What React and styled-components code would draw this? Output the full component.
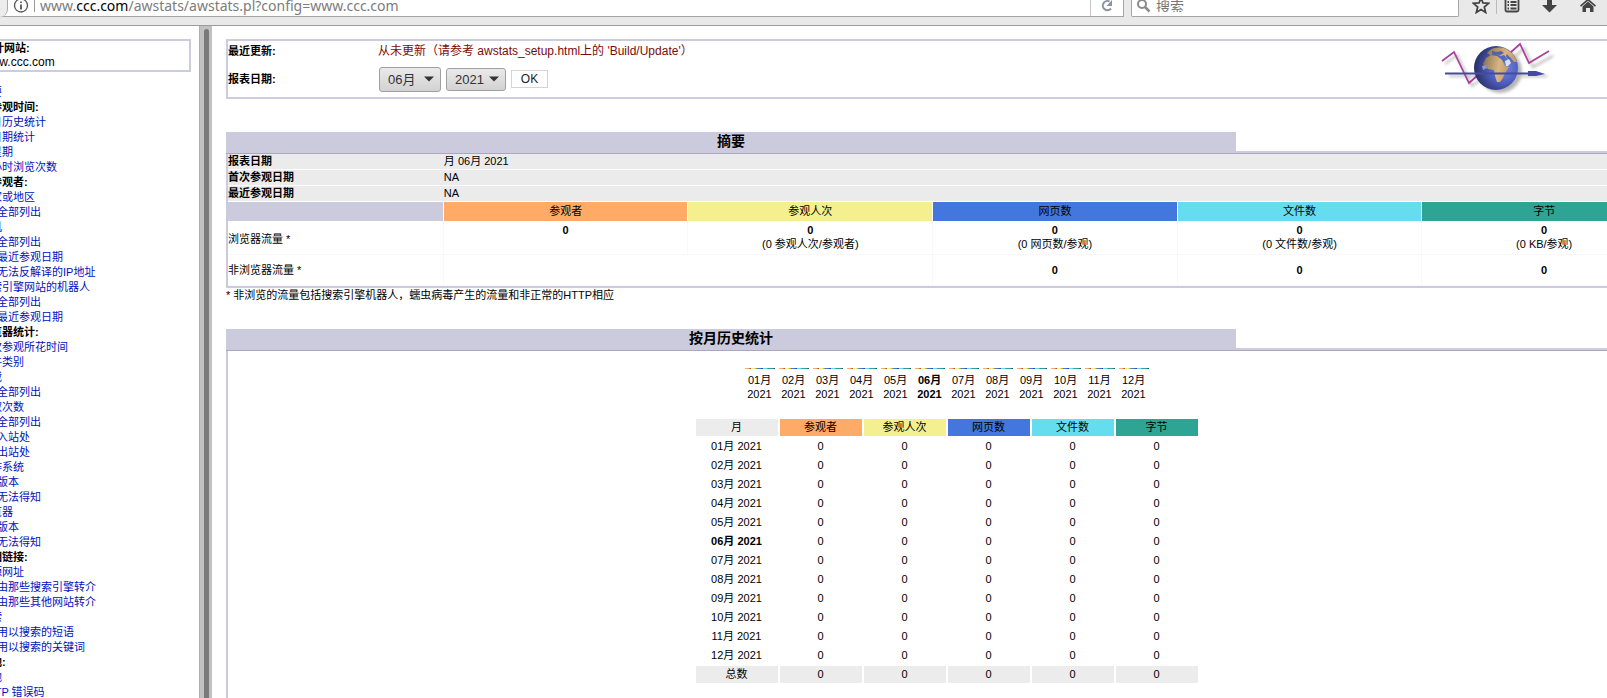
import styled, { createGlobalStyle, css } from 'styled-components';

const GlobalStyle = createGlobalStyle`
* {
	box-sizing: border-box;
}
html, body, #root {
	height: 100%;
}
body {
	margin: 0;
	overflow: hidden;
	background: #fff;
	color: #000;
	font: 11px/15px "Liberation Sans", "Noto Sans CJK SC", sans-serif;
}
a {
	color: #0011bb;
	text-decoration: none;
}
`;

const Page = styled.div`
display: flex;
flex-direction: column;
height: 100vh;
`;

/* browser bar */
const Toolbar = styled.header`
display: flex;
align-items: flex-start;
flex: none;
height: 26px;
background: #e9e9e9;
border-bottom: 1px solid #999b9f;
overflow: hidden;
`;

const Field = styled.div`
display: flex;
align-items: flex-start;
height: 17px;
background: #fff;
border: 1px solid #a5a5a5;
border-top: none;
`;

const UrlField = styled(Field)`
flex: 1;
border-left: none;
`;

const SearchField = styled(Field)`
width: 328px;
margin-left: 7px;
padding-left: 5px;
gap: 5px;
border-radius: 0 0 2px 2px;
`;

const BackEdge = styled.div`
flex: none;
width: 8px;
height: 17px;
background: #ececec;
border-right: 1px solid #aaa;
border-radius: 0 0 12px 0;
`;

const Url = styled.div`
flex: 1;
height: 12px;
padding-left: 5px;
border-left: 1px solid #999;
color: #7c7c7c;
font: 14px/11px "Noto Sans", sans-serif;
b {
	font-weight: 400;
	color: #000;
}
`;

const Reload = styled.button`
display: flex;
justify-content: center;
width: 33px;
height: 16px;
padding: 0;
background: none;
border: none;
border-left: 1px solid #c4c4c4;
`;

const SearchInput = styled.input`
flex: 1;
min-width: 0;
height: 12px;
padding: 0;
border: none;
outline: none;
background: none;
color: #777;
font: 14px/12px "Noto Sans CJK SC", sans-serif;
&::placeholder {
	color: #777;
	opacity: 1;
}
`;

const Tools = styled.div`
display: flex;
align-items: flex-start;
margin-left: 13px;
padding-right: 9px;
`;

const Tool = styled.button`
display: flex;
width: ${p => p.$w || 18}px;
height: 14px;
margin-left: ${p => p.$gap || 0}px;
padding: 0;
border: none;
background: none;
`;

const Divider = styled.i`
width: 1px;
height: 14px;
margin-left: 6px;
background: #bbb;
`;

const Frames = styled.div`
display: flex;
flex: 1;
min-height: 0;
`;

/* left frame, scrolled sideways so the line starts are cut */
const Sidebar = styled.nav`
flex: none;
width: 199px;
padding: 13px 8px 0 0;
overflow: hidden;
`;

const SiteBox = styled.div`
margin-left: -24px;
padding: 0 0 0 4px;
border: 2px solid #ccccdd;
font-size: 12px;
line-height: 15px;
b {
	display: block;
	font-size: 11px;
	line-height: 14px;
}
`;

const Menu = styled.ul`
margin: 13px 0 0 -20px;
padding: 0;
list-style: none;
`;

const MenuItem = styled.li`
height: 15px;
padding-left: ${p => (p.$sub ? 17 : 0)}px;
font-weight: ${p => (p.$head ? 700 : 400)};
white-space: nowrap;
`;

const Scrollbar = styled.div`
flex: none;
width: 13px;
padding: 3px 3px 0 4px;
background: #c1c1c1;
border-left: 1px solid #b0b0b0;
`;

const Thumb = styled.div`
height: 100%;
border-radius: 3px 3px 0 0;
background: #777a79;
`;

/* right frame, wider than the window */
const Main = styled.main`
flex: 1;
min-width: 0;
padding: 13px 0 0 14px;
overflow: hidden;
`;

const Wide = styled.div`
margin-right: -62px;
`;

const FilterBox = styled.form`
display: flex;
justify-content: space-between;
height: 60px;
border: 2px solid #ccccdd;
`;

const FilterGrid = styled.div`
display: grid;
grid-template-columns: 150px auto;
grid-template-rows: 20px 36px;
align-items: center;
font-weight: 700;
`;

const Updated = styled.span`
font-size: 12px;
font-weight: 400;
color: #7d0a0a;
`;

const Controls = styled.div`
display: flex;
align-items: center;
gap: 5px;
padding-left: 1px;
`;

const SelectWrap = styled.label`
display: grid;
align-items: center;
color: #333;
select {
	grid-area: 1 / 1;
	appearance: none;
	width: ${p => p.$w}px;
	height: ${p => p.$h}px;
	padding: 0 0 0 8px;
	border: 1px solid #a0a0a0;
	border-radius: 3px;
	background: linear-gradient(#eaeaea, #d2d2d2);
	color: #333;
	font: 13px "Liberation Sans", "Noto Sans CJK SC", sans-serif;
}
svg {
	grid-area: 1 / 1;
	justify-self: end;
	margin-right: 7px;
	pointer-events: none;
}
`;

const OkButton = styled.button`
width: 37px;
height: 18px;
padding: 0;
border: 1px solid #d4d4d8;
background: #fff;
color: #222;
font: 12px "Liberation Sans", sans-serif;
`;

const Logo = styled.svg`
flex: none;
margin-right: 111px;
`;

const Section = styled.section`
margin-top: ${p => p.$top}px;
`;

const TitleBar = styled.div`
display: flex;
align-items: stretch;
height: 22px;
border-bottom: 1px solid #aca6be;
&::after {
	content: "";
	flex: 1;
	border-bottom: 2px solid #ccccdd;
}
`;

const Title = styled.h2`
width: 70%;
margin: 0;
background: #cccbdd;
text-align: center;
font-size: 14px;
line-height: 18px;
`;

const cellText = css`
padding: 0;
text-align: center;
font-weight: 400;
`;

const SummaryTable = styled.table`
width: 100%;
border: 2px solid #cccbdd;
border-top: none;
border-collapse: separate;
border-spacing: 0;
table-layout: fixed;
th, td {
	${cellText}
}
`;

const InfoRow = styled.tr`
height: 16px;
line-height: 15px;
background: #ebebeb;
&& th, && td {
	text-align: left;
	border-bottom: 1px solid #fff;
}
th {
	font-weight: 700 !important;
}
`;

const ColorHead = styled.th`
background: ${p => p.$color};
`;

const HeadRow = styled.tr`
height: 20px;
&& th {
	border-right: 1px solid #fff;
	border-bottom: 1px solid #fff;
}
`;

const TrafficRow = styled.tr`
height: ${p => p.$h}px;
line-height: 14px;
th, td {
	padding-top: ${p => (p.$v === 'top' ? 1 : 0)}px;
	border-right: 1px solid #f8f8fa;
	border-bottom: 1px solid #f8f8fa;
	vertical-align: ${p => p.$v};
}
&& th {
	text-align: left;
	vertical-align: middle;
}
&& td {
	padding-top: ${p => (p.$v === 'top' ? 1 : 0)}px;
}
`;

const Note = styled.p`
margin: 0;
`;

const HistoryBody = styled.div`
display: flex;
flex-direction: column;
align-items: center;
height: 400px;
padding: 17px 2px 0 0;
border: 2px solid #cccbdd;
border-top: none;
`;

const Chart = styled.div`
display: flex;
gap: 4px;
`;

const Month = styled.div`
width: 30px;
text-align: center;
line-height: 14px;
font-weight: ${p => (p.$current ? 700 : 400)};
white-space: nowrap;
`;

const Bars = styled.div`
display: flex;
height: 1px;
margin-bottom: 4px;
`;

const Bar = styled.i`
flex: 1;
background: linear-gradient(90deg, ${p => p.$color}, ${p => p.$color} 50%, ${p => p.$shade});
`;

const MonthTable = styled.table`
margin-top: 16px;
border-collapse: separate;
border-spacing: 2px;
th, td {
	${cellText}
	width: 82px;
	height: 17px;
}
`;

const MonthRow = styled.tr`
font-weight: ${p => (p.$current ? 700 : 400)};
th {
	font-weight: inherit !important;
}
`;

const TotalRow = styled.tr`
th, td {
	background: #ececec;
}
`;

const columns = [
    { name: '参观者', color: '#ffaa66', shade: '#8a5020' },
    { name: '参观人次', color: '#f4f090', shade: '#8f8a40' },
    { name: '网页数', color: '#4477dd', shade: '#203a80' },
    { name: '文件数', color: '#66ddee', shade: '#2f8090' },
    { name: '字节', color: '#2ea495', shade: '#15584f' },
];

const months = ['01', '02', '03', '04', '05', '06', '07', '08', '09', '10', '11', '12'];

// h = heading, s = sub entry
const menu = [
    ['', '摘要'],
    ['h', '按参观时间:'],
    ['', '按月历史统计'],
    ['', '按日期统计'],
    ['', '按星期'],
    ['', '每小时浏览次数'],
    ['h', '按参观者:'],
    ['', '国家或地区'],
    ['s', '全部列出'],
    ['', '主机'],
    ['s', '全部列出'],
    ['s', '最近参观日期'],
    ['s', '无法反解译的IP地址'],
    ['', '搜索引擎网站的机器人'],
    ['s', '全部列出'],
    ['s', '最近参观日期'],
    ['h', '浏览器统计:'],
    ['', '每次参观所花时间'],
    ['', '文件类别'],
    ['', '下载'],
    ['s', '全部列出'],
    ['', '存取次数'],
    ['s', '全部列出'],
    ['s', '入站处'],
    ['s', '出站处'],
    ['', '操作系统'],
    ['s', '版本'],
    ['s', '无法得知'],
    ['', '浏览器'],
    ['s', '版本'],
    ['s', '无法得知'],
    ['h', '反相链接:'],
    ['', '来源网址'],
    ['s', '由那些搜索引擎转介'],
    ['s', '由那些其他网站转介'],
    ['', '搜索'],
    ['s', '用以搜索的短语'],
    ['s', '用以搜索的关键词'],
    ['h', '其他:'],
    ['', '其他'],
    ['', 'HTTP 错误码'],
];

const Arrow = () => (
    <svg width="10" height="6" viewBox="0 0 10 6"><path d="M0 0.5h10L5 5.5z" fill="#333" /></svg>
);

const Select = ({ label, value, options, w, h }) => (
    <SelectWrap $w={w} $h={h}>
        <select aria-label={label} defaultValue={value}>
            {options.map(o => <option key={o}>{o}</option>)}
        </select>
        <Arrow />
    </SelectWrap>
);

const GlobeLogo = () => (
    <Logo width="116" height="56" viewBox="0 0 116 56" role="img" aria-label="AWStats">
        <defs>
            <radialGradient id="sea" cx="0.68" cy="0.5" r="0.66">
                <stop offset="0" stopColor="#7389e0" />
                <stop offset="0.5" stopColor="#4f5fc0" />
                <stop offset="1" stopColor="#2b3168" />
            </radialGradient>
            <linearGradient id="land" x1="0" y1="0.3" x2="1" y2="0.5">
                <stop offset="0" stopColor="#8e7653" />
                <stop offset="0.6" stopColor="#d8b581" />
                <stop offset="1" stopColor="#c49b69" />
            </linearGradient>
            <filter id="soft" x="-20%" y="-20%" width="150%" height="150%">
                <feGaussianBlur stdDeviation="1.5" />
            </filter>
        </defs>
        <g filter="url(#soft)" opacity="0.4" fill="none" stroke="#555" strokeWidth="2">
            <path d="M5 23l12-9 15 31 9-7M76 15l8-8 9 19 20-11M9 35h98" />
            <circle cx="60" cy="30" r="21" fill="#444" />
        </g>
        <path d="M2 20l12-9 15 31 9-8M70 12l10-9 9 19 20-12" fill="none" stroke="#aa3f99" strokeWidth="1.7" />
        <circle cx="56" cy="27" r="22" fill="url(#sea)" />
        <path d="M50 9c5-3 12-3 16-1 6 3 9 7 11 13l-3 0-4-5-2 2-4-4-3 1-5-2-6 1-3-2z" fill="url(#land)" />
        <path d="M46 17l5-3 6 1 5 4 3 6 4 1-4 6-2 5-3 4-3 0-2-6-1-6-6-1-5-5z" fill="url(#land)" />
        <path d="M52 10l5 1 4-1 3 2-4 2-5-1-3 1zM62 15l3 5-1 1-3-5zM67 13l3 4-1 2-3-4z" fill="#5462a9" />
        <path d="M65 20l4-2 2 4-3 3-2 0z" fill="#d9e1f7" />
        <path d="M42 25l4-1 1 3-4 2z" fill="#8e95c9" />
        <path d="M5 32.500h84" stroke="#454ba4" strokeWidth="1.8" />
        <path d="M88 30l8 0 9 3-9 2-8 0z" fill="#454ba4" />
    </Logo>
);

const BrowserBar = () => (
    <Toolbar>
        <UrlField>
            <BackEdge />
            <svg width="26" height="17" viewBox="0 0 26 17" fill="none" stroke="#555">
                <circle cx="13" cy="5.5" r="6.5" strokeWidth="1.3" />
                <path d="M13 4.5v5M13 1.5v1.6" strokeWidth="1.8" />
            </svg>
            <Url>www.<b>ccc.com</b>/awstats/awstats.pl?config=www.ccc.com</Url>
            <Reload aria-label="Reload">
                <svg width="14" height="12" viewBox="0 0 14 12" fill="none" stroke="#8a95a0" strokeWidth="2">
                    <path d="M9.5 1.5A4.6 4.6 0 1 0 11 8.500" />
                    <path d="M12 0v6H6.500z" fill="#8a95a0" stroke="none" />
                </svg>
            </Reload>
        </UrlField>
        <SearchField>
            <svg width="14" height="16" viewBox="0 0 14 16" fill="none" stroke="#8b8b8b" strokeWidth="2">
                <circle cx="5" cy="4" r="4" />
                <path d="M8 7l4.500 4.500" strokeWidth="2.5" />
            </svg>
            <SearchInput aria-label="搜索" placeholder="搜索" />
        </SearchField>
        <Tools>
            <Tool aria-label="Bookmark">
                <svg width="18" height="14" viewBox="0 0 18 14" fill="none" stroke="#444" strokeWidth="1.8">
                    <path d="M9 -2l2 5 5.500.4-4.200 3.600 1.300 5.400L9 9.500l-4.600 2.900 1.300-5.400L1.500 3.400 7 3z" />
                </svg>
            </Tool>
            <Divider />
            <Tool aria-label="Library" $gap={7}>
                <svg width="16" height="14" viewBox="0 0 16 14" fill="none" stroke="#444" strokeWidth="1.8">
                    <rect x="1.5" y="-2" width="13" height="13.5" rx="1.5" />
                    <path d="M3.500 2h1.500M3.500 5h1.500M3.500 8.500h1.500M6.500 2h6M6.500 5h6M6.500 8.500h6" />
                </svg>
            </Tool>
            <Tool aria-label="Downloads" $gap={20}>
                <svg width="16" height="14" viewBox="0 0 16 14" fill="#444"><path d="M5 0h5v5h5l-7.500 7.500L0 5h5z" /></svg>
            </Tool>
            <Tool aria-label="Home" $gap={20}>
                <svg width="16" height="14" viewBox="0 0 16 14" fill="#444"><path d="M2.500 6.500L8 1.500l5.500 5V12H10V8H6v4H2.500zM8-1.500l8 7-1 1.300-7-6-7 6L0 5.500z" /></svg>
            </Tool>
        </Tools>
    </Toolbar>
);

const Summary = () => (
    <Section $top={33}>
        <TitleBar><Title>摘要</Title></TitleBar>
        <SummaryTable>
            <colgroup>
                <col width="15%" />
                {columns.map(c => <col key={c.name} width="17%" />)}
            </colgroup>
            <tbody>
                <InfoRow><th>报表日期</th><td colSpan="5">月 06月 2021</td></InfoRow>
                <InfoRow><th>首次参观日期</th><td colSpan="5">NA</td></InfoRow>
                <InfoRow><th>最近参观日期</th><td colSpan="5">NA</td></InfoRow>
                <HeadRow>
                    <ColorHead $color="#cccbdd" />
                    {columns.map(c => <ColorHead key={c.name} $color={c.color}>{c.name}</ColorHead>)}
                </HeadRow>
                <TrafficRow $h={33} $v="top">
                    <th>浏览器流量 *</th>
                    <td><b>0</b><br />&nbsp;</td>
                    <td><b>0</b><br />(0 参观人次/参观者)</td>
                    <td><b>0</b><br />(0 网页数/参观)</td>
                    <td><b>0</b><br />(0 文件数/参观)</td>
                    <td><b>0</b><br />(0 KB/参观)</td>
                </TrafficRow>
                <TrafficRow $h={31} $v="middle">
                    <th>非浏览器流量 *</th>
                    <td colSpan="2" />
                    <td><b>0</b></td>
                    <td><b>0</b></td>
                    <td><b>0</b></td>
                </TrafficRow>
            </tbody>
        </SummaryTable>
        <Note>* 非浏览的流量包括搜索引擎机器人，蠕虫病毒产生的流量和非正常的HTTP相应</Note>
    </Section>
);

const History = () => (
    <Section $top={26}>
        <TitleBar><Title>按月历史统计</Title></TitleBar>
        <HistoryBody>
            <Chart>
                {months.map(m => (
                    <Month key={m} $current={m === '06'}>
                        <Bars>{columns.map(c => <Bar key={c.name} $color={c.color} $shade={c.shade} />)}</Bars>
                        {m}月<br />2021
                    </Month>
                ))}
            </Chart>
            <MonthTable>
                <thead>
                    <tr>
                        <ColorHead $color="#ececec">月</ColorHead>
                        {columns.map(c => <ColorHead key={c.name} $color={c.color}>{c.name}</ColorHead>)}
                    </tr>
                </thead>
                <tbody>
                    {months.map(m => (
                        <MonthRow key={m} $current={m === '06'}>
                            <th>{m}月 2021</th>
                            {columns.map(c => <td key={c.name}>0</td>)}
                        </MonthRow>
                    ))}
                    <TotalRow>
                        <th>总数</th>
                        {columns.map(c => <td key={c.name}>0</td>)}
                    </TotalRow>
                </tbody>
            </MonthTable>
        </HistoryBody>
    </Section>
);

const App = () => {
    return (
        <Page>
            <GlobalStyle />
            <BrowserBar />
            <Frames>
                <Sidebar>
                    <SiteBox><b>统计网站:</b>www.ccc.com</SiteBox>
                    <Menu>
                        {menu.map(([kind, text], i) => (
                            <MenuItem key={i} $head={kind === 'h'} $sub={kind === 's'}>
                                {kind === 'h' ? text : <a href="#top">{text}</a>}
                            </MenuItem>
                        ))}
                    </Menu>
                </Sidebar>
                <Scrollbar><Thumb /></Scrollbar>
                <Main>
                    <Wide>
                        <FilterBox onSubmit={e => e.preventDefault()}>
                            <FilterGrid>
                                <span>最近更新:</span>
                                <Updated>从未更新（请参考 awstats_setup.html上的 'Build/Update'）</Updated>
                                <span>报表日期:</span>
                                <Controls>
                                    <Select label="月" value="06月" options={months.map(m => m + '月')} w={62} h={25} />
                                    <Select label="年" value="2021" options={['2020', '2021']} w={60} h={23} />
                                    <OkButton type="submit">OK</OkButton>
                                </Controls>
                            </FilterGrid>
                            <GlobeLogo />
                        </FilterBox>
                        <Summary />
                        <History />
                    </Wide>
                </Main>
            </Frames>
        </Page>
    );
};

export default App;
